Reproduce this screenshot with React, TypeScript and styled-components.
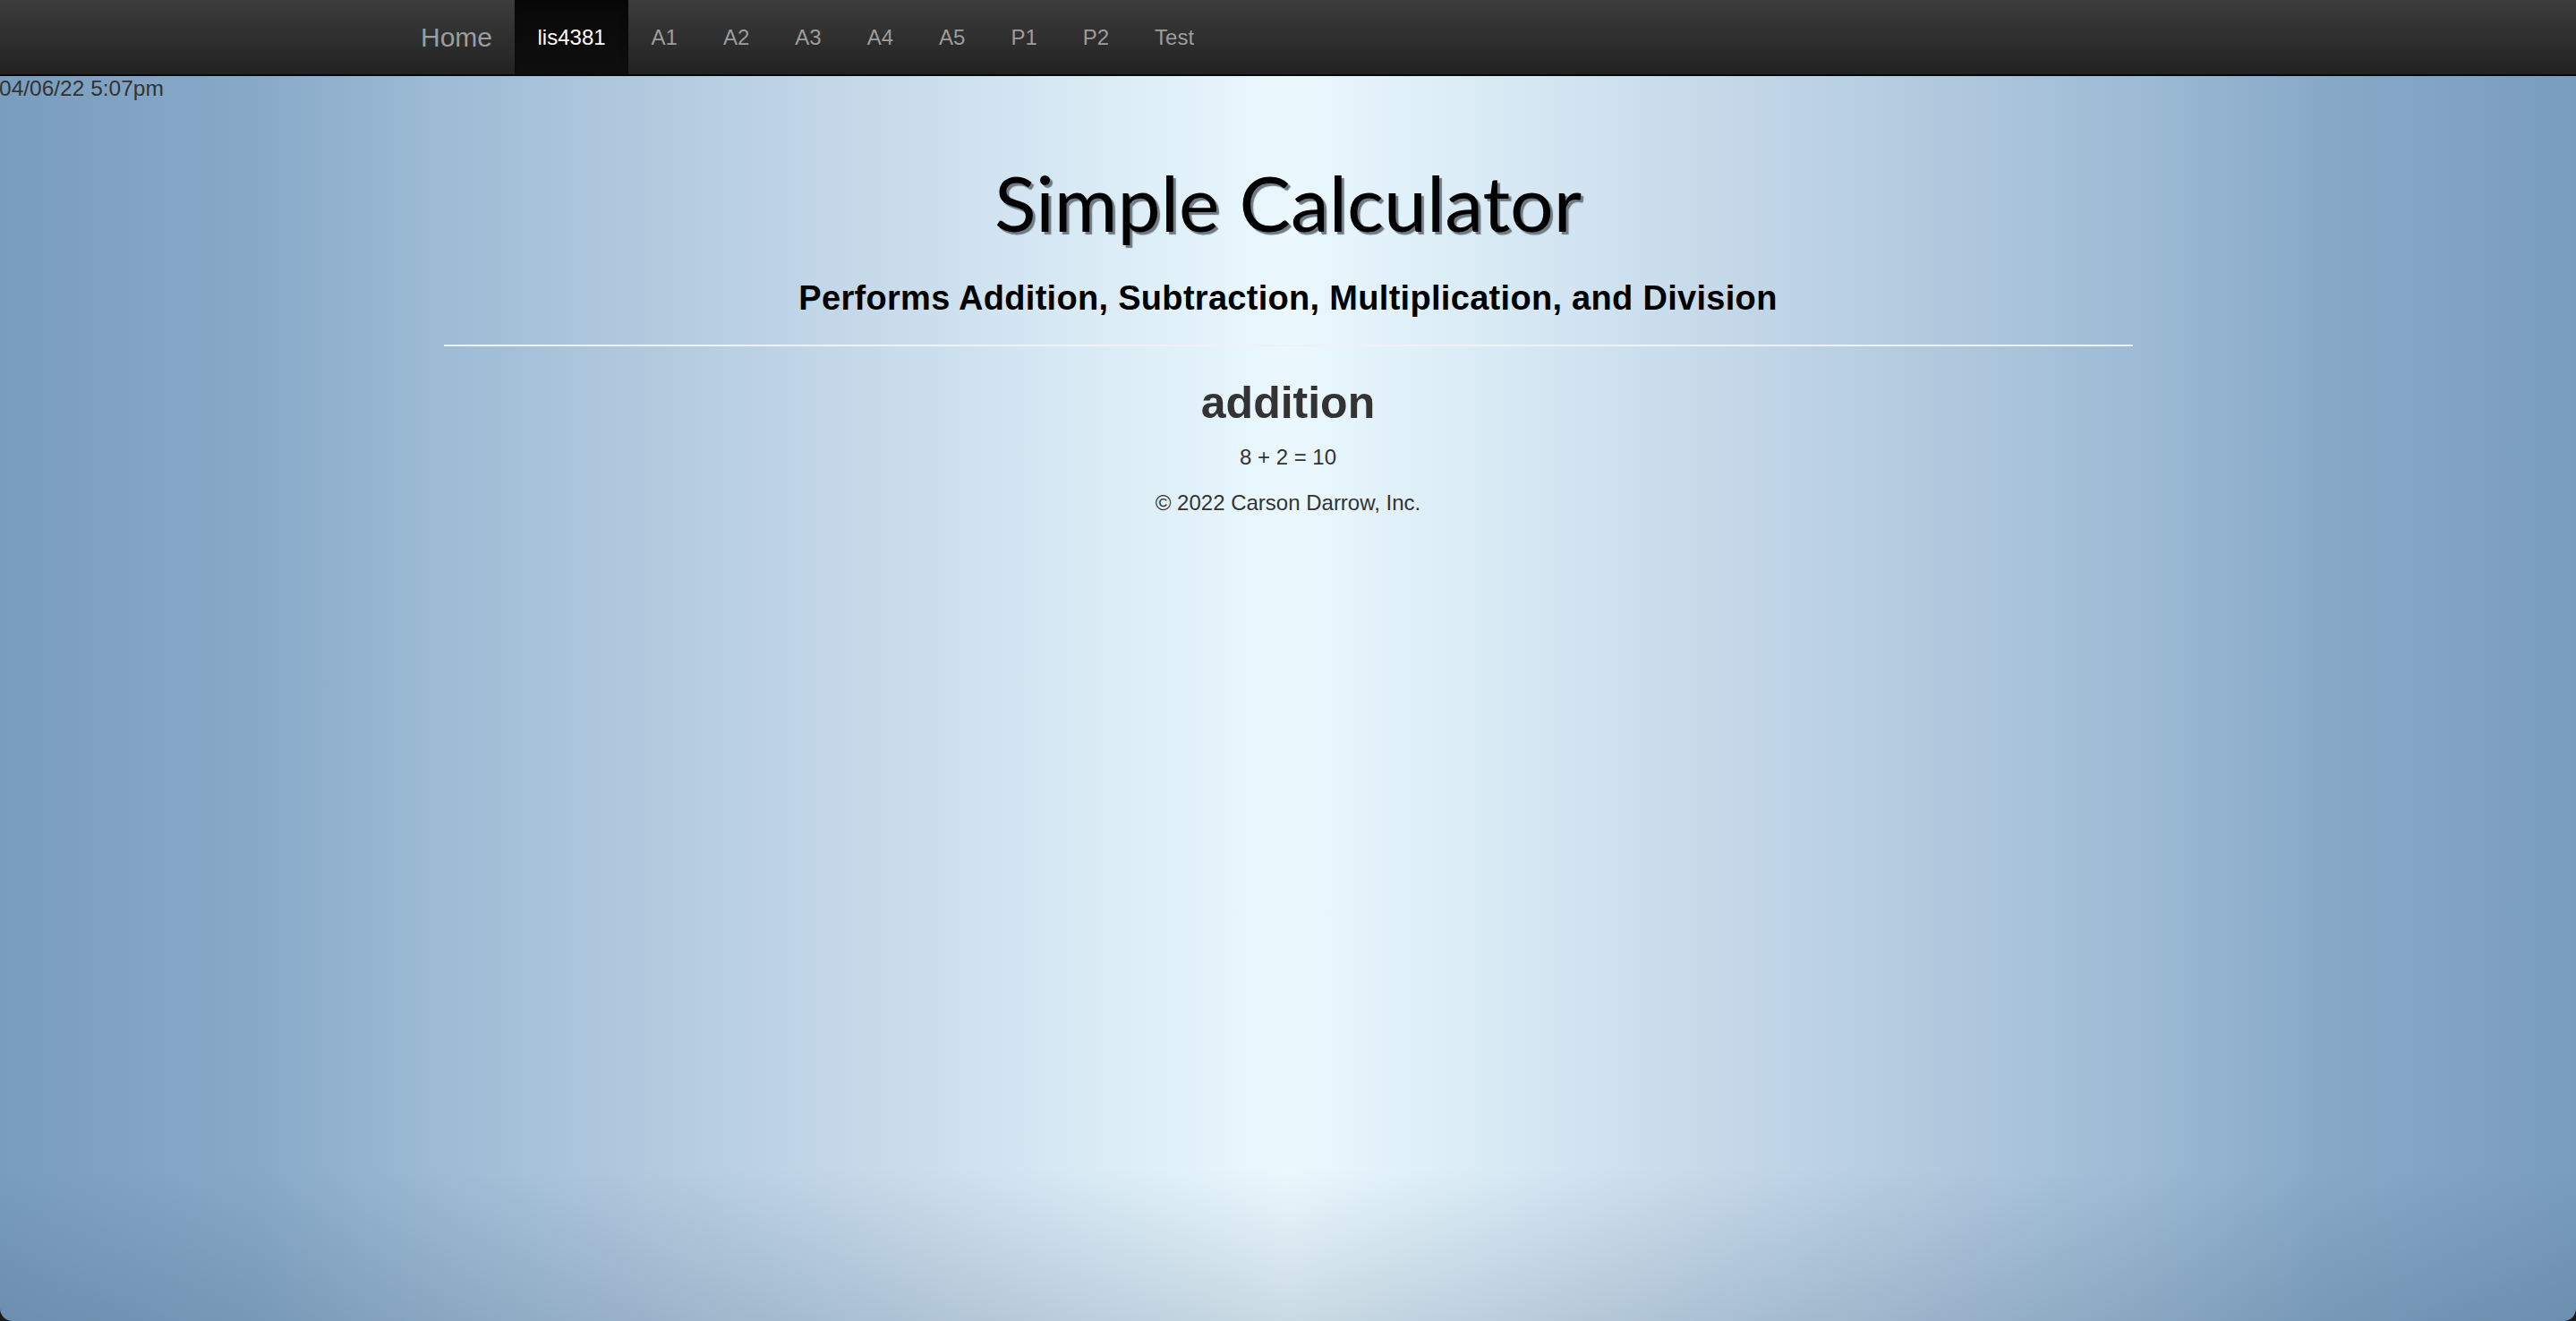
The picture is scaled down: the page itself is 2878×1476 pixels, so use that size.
import React from "react";
import styled, { createGlobalStyle } from "styled-components";

const GlobalStyle = createGlobalStyle`
  html, body {
    margin: 0;
    padding: 0;
    background: #1a1a1a;
  }
  body {
    font-family: "Liberation Sans", Arial, Helvetica, sans-serif;
    font-size: 24px;
    color: #333;
  }
  * { box-sizing: border-box; }
`;

const Page = styled.div`
  min-height: 100vh;
  display: flex;
  flex-direction: column;
  border-radius: 0 0 14px 14px;
  overflow: hidden;
  background:
    linear-gradient(to bottom, rgba(40, 70, 100, 0) calc(100% - 170px), rgba(40, 70, 100, 0.17) 100%),
    linear-gradient(
      to right,
      #799dbe 0%,
      #88aac9 10%,
      #9fbdd6 18%,
      #b2c9de 25%,
      #c6daea 34%,
      #dbecf6 43%,
      #ebf8fe 50%,
      #dbecf6 57%,
      #c6daea 66%,
      #b2c9de 75%,
      #9fbdd6 82%,
      #88aac9 90%,
      #799dbe 100%
    );
`;

const NavBar = styled.nav`
  height: 85px;
  background: linear-gradient(to bottom, #3c3c3c 0%, #222 100%);
  border-bottom: 2px solid #080808;
  display: flex;
`;

const NavInner = styled.div`
  margin-left: 445px;
  display: flex;
  align-items: stretch;
  height: 83px;
`;

const NavLink = styled.a<{ $active?: boolean; $brand?: boolean }>`
  display: flex;
  align-items: center;
  padding: 0 ${(p) => (p.$brand ? "25px" : "25.5px")};
  font-family: "Liberation Sans", Arial, Helvetica, sans-serif;
  font-size: ${(p) => (p.$brand ? "30px" : "24px")};
  color: ${(p) => (p.$active ? "#ffffff" : "#9d9d9d")};
  background: ${(p) =>
    p.$active ? "linear-gradient(to bottom, #080808 0%, #0f0f0f 100%)" : "transparent"};
  box-shadow: ${(p) => (p.$active ? "inset 0 3px 9px rgba(0,0,0,0.25)" : "none")};
  text-decoration: none;
  white-space: nowrap;
`;

const DateLine = styled.div`
  font-size: 24.5px;
  line-height: 26px;
  color: #333;
  margin-top: 1px;
  margin-left: -1px;
`;

const Main = styled.main`
  width: 1887px;
  margin: 0 auto;
  display: flex;
  flex-direction: column;
  align-items: center;
`;

const Title = styled.h1`
  margin: 62px 0 0;
  font-family: Lato, "Open Sans", sans-serif;
  font-weight: 400;
  font-size: 86px;
  line-height: 1.2;
  color: #000;
  text-shadow: 3px 3px 1px #6f7b84;
  white-space: nowrap;
`;

const Subtitle = styled.h2`
  margin: 34px 0 0;
  font-family: "Liberation Sans", Arial, sans-serif;
  font-weight: 700;
  font-size: 38px;
  line-height: 44px;
  letter-spacing: 0.3px;
  color: #000;
  white-space: nowrap;
`;

const Rule = styled.hr`
  width: 100%;
  margin: 30px 0 0;
  border: 0;
  border-top: 2px solid #eef2f4;
`;

const Section = styled.h3`
  margin: 35px 0 0;
  font-family: "Liberation Sans", Arial, sans-serif;
  font-weight: 700;
  font-size: 50px;
  line-height: 56px;
  color: #333;
`;

const Para = styled.p<{ $gap: number }>`
  margin: ${(p) => p.$gap}px 0 0;
  font-size: 24px;
  line-height: 34px;
  color: #333;
  white-space: nowrap;
`;

const navItems = ["A1", "A2", "A3", "A4", "A5", "P1", "P2", "Test"];

export default function App() {
  return (
    <>
      <GlobalStyle />
      <Page>
        <NavBar>
          <NavInner>
            <NavLink $brand href="#">Home</NavLink>
            <NavLink $active href="#">lis4381</NavLink>
            {navItems.map((n) => (
              <NavLink key={n} href="#">{n}</NavLink>
            ))}
          </NavInner>
        </NavBar>
        <DateLine>04/06/22 5:07pm</DateLine>
        <Main>
          <Title>Simple Calculator</Title>
          <Subtitle>Performs Addition, Subtraction, Multiplication, and Division</Subtitle>
          <Rule />
          <Section>addition</Section>
          <Para $gap={16}>8 + 2 = 10</Para>
          <Para $gap={17}>© 2022 Carson Darrow, Inc.</Para>
        </Main>
      </Page>
    </>
  );
}
